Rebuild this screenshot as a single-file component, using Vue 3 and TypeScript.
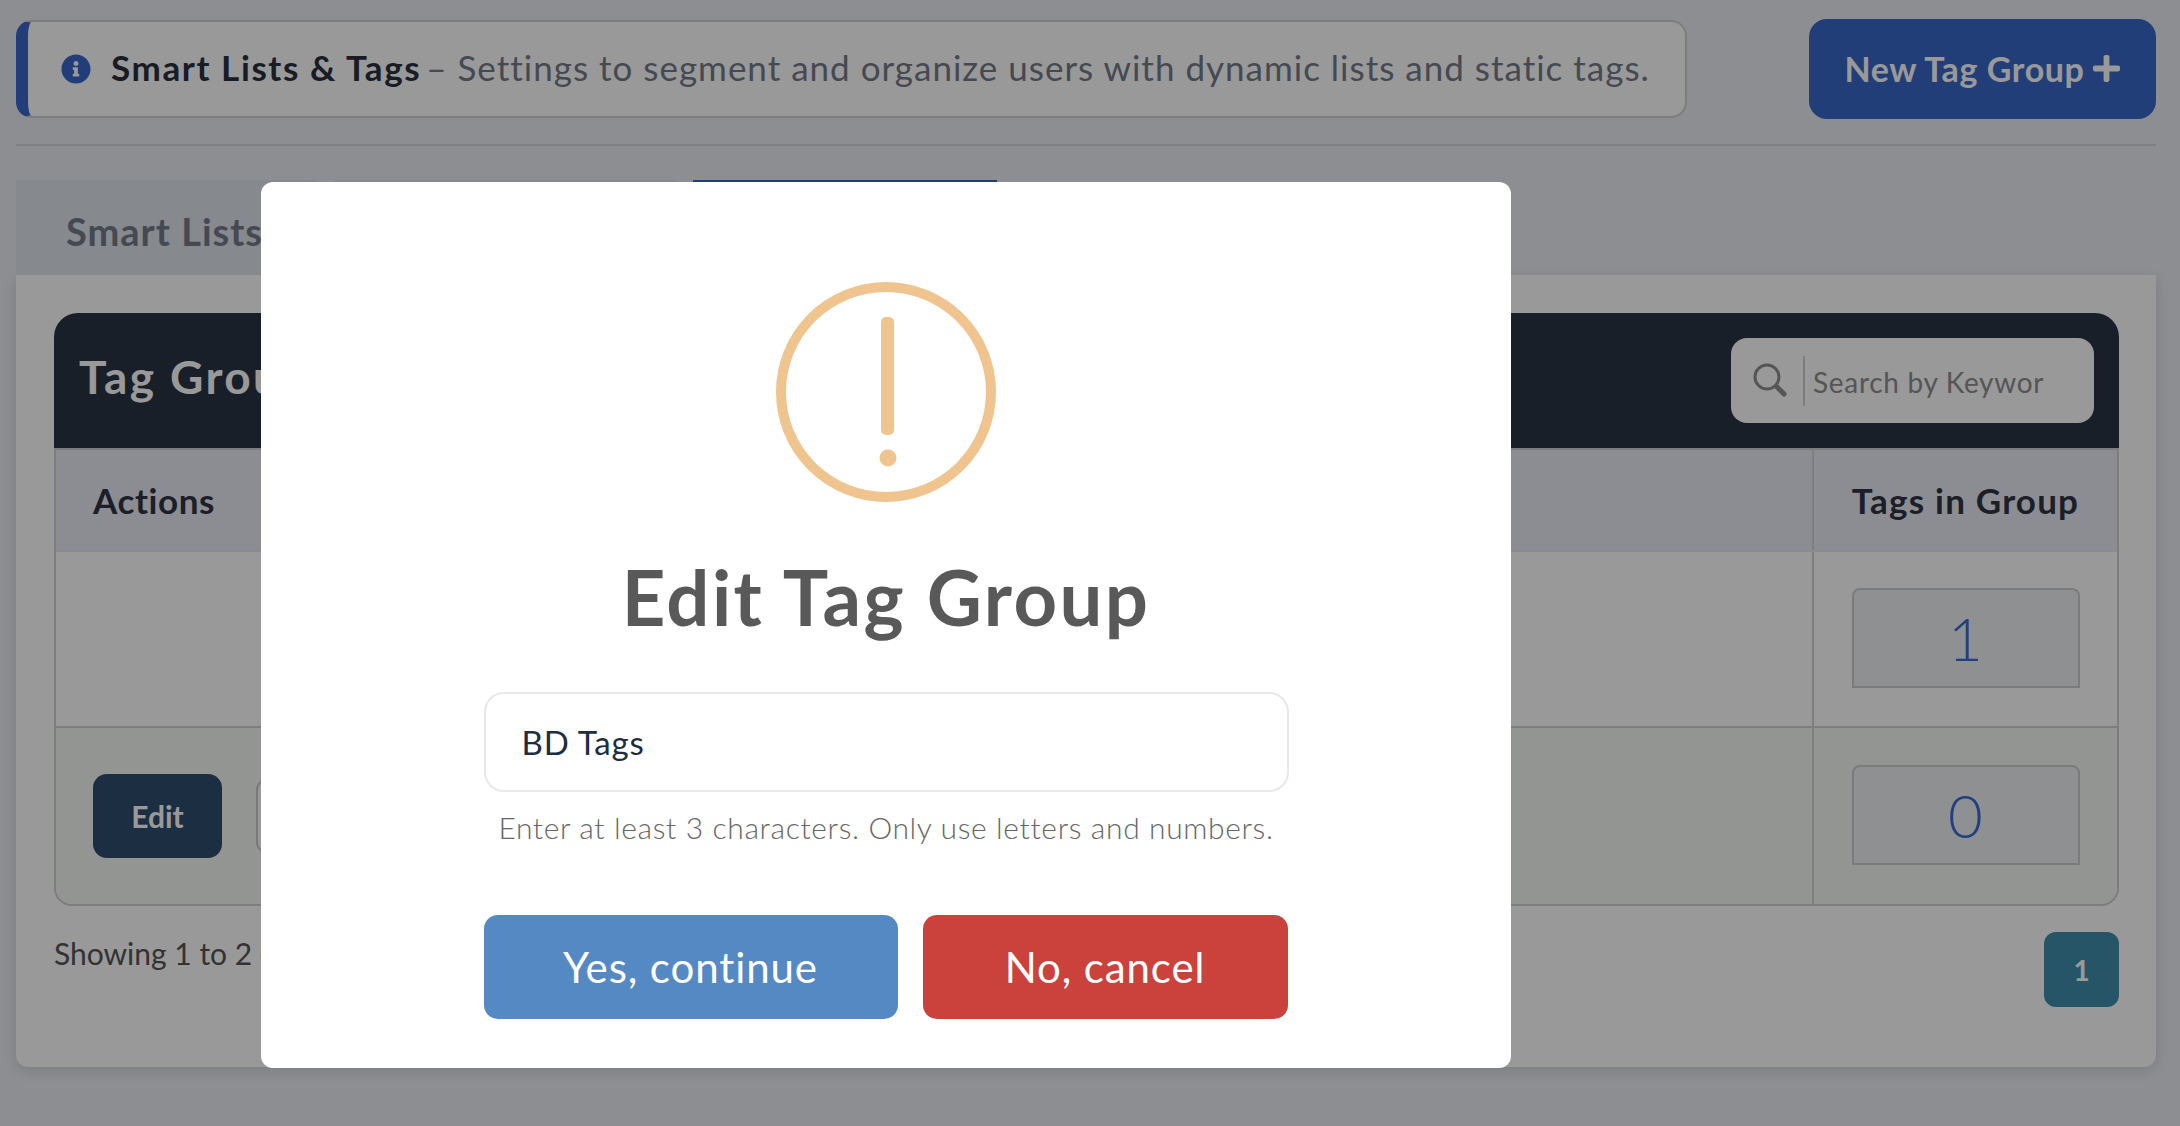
<template>
  <div class="page">
    <div class="top-row">
      <div class="alert">
        <svg class="info-icon" viewBox="0 0 512 512">
          <path d="M256 8C119.043 8 8 119.083 8 256c0 136.997 111.043 248 248 248s248-111.003 248-248C504 119.083 392.957 8 256 8zm0 110c23.196 0 42 18.804 42 42s-18.804 42-42 42-42-18.804-42-42 18.804-42 42-42zm56 254c0 6.627-5.373 12-12 12h-88c-6.627 0-12-5.373-12-12v-24c0-6.627 5.373-12 12-12h12v-64h-12c-6.627 0-12-5.373-12-12v-24c0-6.627 5.373-12 12-12h64c6.627 0 12 5.373 12 12v100h12c6.627 0 12 5.373 12 12v24z" />
        </svg>
        <span class="alert-text"><strong>Smart Lists &amp; Tags</strong> – Settings to segment and organize users with dynamic lists and static tags.</span>
      </div>
      <button class="new-btn">
        New Tag Group
        <svg class="plus-icon" viewBox="0 0 448 512">
          <path d="M416 208H272V64c0-17.67-14.33-32-32-32h-32c-17.67 0-32 14.33-32 32v144H32c-17.67 0-32 14.33-32 32v32c0 17.67 14.33 32 32 32h144v144c0 17.67 14.33 32 32 32h32c17.67 0 32-14.33 32-32V304h144c17.67 0 32-14.33 32-32v-32c0-17.67-14.33-32-32-32z" />
        </svg>
      </button>
    </div>
    <hr class="divider" />

    <div class="tabs">
      <div
        v-for="tab in tabs"
        :key="tab.label"
        :class="['tab', { active: tab.active }]"
        :style="{ width: tab.width + 'px' }"
      >
        {{ tab.label }}
      </div>
    </div>

    <div class="panel">
      <div class="card-head">
        <h2>Tag Groups</h2>
        <div class="search">
          <svg class="search-icon" viewBox="0 0 34 34">
            <circle cx="14" cy="14" r="12" />
            <line class="handle" x1="23.5" y1="23.5" x2="31" y2="31" />
          </svg>
          <input type="text" placeholder="Search by Keyword" />
        </div>
      </div>

      <div class="table">
        <div class="row head">
          <div class="cell actions">Actions</div>
          <div class="cell name">Tag Group Name</div>
          <div class="cell count">Tags in Group</div>
        </div>
        <div v-for="(row, i) in rows" :key="row.name" :class="['row', { odd: i === 1 }]">
          <div class="cell actions">
            <template v-if="row.editable">
              <button class="edit-btn">Edit</button>
              <button class="del-btn">Delete</button>
            </template>
          </div>
          <div class="cell name">{{ row.name }}</div>
          <div class="cell count">
            <div class="badge">{{ row.tags }}</div>
          </div>
        </div>
      </div>

      <div class="table-foot">
        <span class="showing">Showing 1 to 2 of 2 entries</span>
        <button class="page-btn">1</button>
      </div>
    </div>

    <div class="overlay">
      <div class="modal">
        <svg class="warn-icon" viewBox="0 0 220 220">
          <circle class="ring" cx="110" cy="110" r="105" />
          <rect x="105" y="35" width="13" height="118" rx="5" />
          <circle cx="112" cy="176" r="8.5" />
        </svg>
        <h1>Edit Tag Group</h1>
        <input class="name-input" type="text" value="BD Tags" />
        <p class="hint">Enter at least 3 characters. Only use letters and numbers.</p>
        <div class="modal-btns">
          <button class="yes">Yes, continue</button>
          <button class="no">No, cancel</button>
        </div>
      </div>
    </div>
  </div>
</template>

<script setup lang="ts">
interface TagGroup {
  name: string;
  tags: number;
  editable: boolean;
}

const tabs = [
  { label: "Smart Lists", width: 301, active: false },
  { label: "Static Tags", width: 342, active: false },
  { label: "Tag Groups", width: 304, active: true },
];

const rows: TagGroup[] = [
  { name: "Default Tags", tags: 1, editable: false },
  { name: "BD Tags", tags: 0, editable: true },
];
</script>

<style>
body {
  margin: 0;
  background: #ebedf3;
}
</style>

<style scoped>
.page {
  box-sizing: border-box;
  height: 1126px;
  padding: 19px 24px 0 16px;
  font-family: "Lato", "Noto Sans", sans-serif;
  color: #2f3543;
  overflow: hidden;
}

.top-row {
  display: flex;
  justify-content: space-between;
  height: 100px;
}

.alert {
  box-sizing: border-box;
  display: flex;
  align-items: center;
  width: 1671px;
  height: 98px;
  margin-top: 1px;
  padding-left: 33px;
  background: #fff;
  border: 2px solid #d0d0d0;
  border-left: 12px solid #3a68c8;
  border-radius: 16px;
}

.info-icon {
  width: 30px;
  height: 30px;
  fill: #3a68c8;
  margin-right: 20px;
  flex-shrink: 0;
}

.alert-text {
  margin-top: -4px;
  font-size: 35px;
  color: #737b89;
  letter-spacing: 1px;
  white-space: nowrap;
}

.alert-text strong {
  margin-right: -5px;
  font-weight: 700;
  color: #2b303c;
  letter-spacing: 1.6px;
}

.new-btn {
  display: flex;
  align-items: center;
  justify-content: center;
  gap: 9px;
  width: 347px;
  padding-bottom: 3px;
  border: none;
  border-radius: 18px;
  background: #3a68c8;
  color: #fff;
  font: 700 34px "Lato", sans-serif;
  letter-spacing: 0.6px;
}

.plus-icon {
  width: 27px;
  height: 31px;
  fill: #fff;
}

.divider {
  height: 2px;
  margin: 25px 0 34px;
  border: none;
  background: #d3d5da;
}

.tabs {
  display: flex;
  gap: 17px;
  height: 95px;
}

.tab {
  box-sizing: border-box;
  padding: 28px 50px 0;
  background: #dfe4ec;
  font-size: 38px;
  font-weight: 700;
  color: #737b89;
  letter-spacing: 1px;
  white-space: nowrap;
}

.tab.active {
  background: #fff;
  border-top: 3px solid #3a68c8;
}

.panel {
  box-sizing: border-box;
  height: 792px;
  padding: 38px 37px 0 38px;
  background: #fff;
  border-radius: 0 0 12px 12px;
  box-shadow: 0 4px 14px rgba(0, 0, 0, 0.12);
}

.card-head {
  box-sizing: border-box;
  display: flex;
  align-items: center;
  justify-content: space-between;
  height: 135px;
  padding: 0 25px;
  background: #283444;
  border-radius: 24px 24px 0 0;
}

.card-head h2 {
  margin: 0 0 8px;
  font-size: 46px;
  font-weight: 700;
  color: #fff;
  letter-spacing: 2.4px;
}

.search {
  box-sizing: border-box;
  display: flex;
  align-items: center;
  width: 363px;
  height: 85px;
  padding-left: 22px;
  background: #fff;
  border-radius: 16px;
}

.search-icon {
  width: 34px;
  height: 34px;
  flex-shrink: 0;
  margin-top: -2px;
  fill: none;
  stroke: #8e8e8e;
  stroke-width: 3;
}

.search-icon .handle {
  stroke-width: 5;
  stroke-linecap: round;
}

.search input {
  box-sizing: border-box;
  width: 241px;
  height: 50px;
  margin-left: 16px;
  padding: 2px 0 0 8px;
  border: none;
  border-left: 2px solid #d2d2d2;
  outline: none;
  font: 400 28px "Lato", sans-serif;
  letter-spacing: 0.7px;
}

.search input::placeholder {
  color: #8e8e8e;
  opacity: 1;
}

.table {
  border: solid #d0d0d0;
  border-width: 0 2px 2px;
  border-radius: 0 0 18px 18px;
}

.row {
  box-sizing: border-box;
  display: flex;
  height: 176px;
  border-top: 2px solid #e8e8e8;
}

.row.head {
  height: 102px;
  background: #e8ebf3;
  border-top: 2px solid #cfcfd0;
  font-size: 35px;
  font-weight: 700;
  color: #2f3543;
  letter-spacing: 0.6px;
}

.row.odd {
  height: 178px;
  background: #f6f8f6;
  border-top-color: #d3d3d3;
  border-radius: 0 0 16px 16px;
}

.cell {
  display: flex;
  align-items: center;
  padding: 0 37px;
  box-sizing: border-box;
}

.actions {
  width: 600px;
  gap: 34px;
}

.name {
  flex: 1;
  font-size: 32px;
}

.count {
  width: 305px;
  justify-content: center;
  padding: 0;
  border-left: 2px solid #d3d3d3;
}

.row.head .count {
  letter-spacing: 1.2px;
  white-space: nowrap;
}

.badge {
  box-sizing: border-box;
  display: flex;
  align-items: center;
  justify-content: center;
  width: 228px;
  height: 100px;
  margin-bottom: 3px;
  background: #eef0f3;
  border: 2px solid #cccdd0;
  border-radius: 8px 8px 0 0;
  font-size: 60px;
  font-weight: 300;
  color: #3a6bd5;
}

.edit-btn {
  width: 129px;
  height: 84px;
  border: none;
  border-radius: 14px;
  background: #2f4d6e;
  color: #fff;
  font: 700 30px "Lato", sans-serif;
}

.del-btn {
  width: 140px;
  height: 76px;
  border: 2px solid #ccc;
  border-radius: 12px;
  background: #fff;
  color: #555;
  font: 700 28px "Lato", sans-serif;
}

.table-foot {
  display: flex;
  align-items: flex-start;
  justify-content: space-between;
  margin-top: 26px;
}

.showing {
  padding-top: 3px;
  font-size: 30px;
  color: #555;
}

.page-btn {
  width: 75px;
  height: 75px;
  border: none;
  border-radius: 12px;
  background: #3f8eaa;
  color: #fff;
  font: 700 28px "Lato", sans-serif;
}

.overlay {
  box-sizing: border-box;
  position: fixed;
  inset: 0;
  padding: 182px 0 0 261px;
  background: rgba(0, 0, 0, 0.4);
}

.modal {
  box-sizing: border-box;
  display: flex;
  flex-direction: column;
  align-items: center;
  width: 1250px;
  height: 886px;
  padding-top: 100px;
  background: #fff;
  border-radius: 12px;
}

.warn-icon {
  width: 220px;
  height: 220px;
  flex-shrink: 0;
  fill: #f0c48f;
}

.warn-icon .ring {
  fill: none;
  stroke: #f0c48f;
  stroke-width: 10;
}

.modal h1 {
  margin: 49px 0 0;
  font-size: 76px;
  line-height: 92px;
  font-weight: 700;
  color: #595959;
  letter-spacing: 2.4px;
}

.name-input {
  box-sizing: border-box;
  width: 805px;
  height: 100px;
  margin-top: 49px;
  padding: 0 36px;
  border: 2px solid #e8e8e8;
  border-radius: 20px;
  outline: none;
  font: 400 33px "Lato", sans-serif;
  color: #1c2e42;
  letter-spacing: 0.8px;
}

.hint {
  margin: 17px 0 0;
  font-size: 30px;
  line-height: 36px;
  font-weight: 300;
  color: #666;
  letter-spacing: 0.63px;
}

.modal-btns {
  display: flex;
  gap: 25px;
  width: 805px;
  margin-top: 70px;
}

.modal-btns button {
  height: 104px;
  border: none;
  border-radius: 14px;
  color: #fff;
  font: 400 42px "Lato", sans-serif;
  letter-spacing: 0.9px;
}

.yes {
  width: 414px;
  background: #5589c4;
}

.no {
  width: 365px;
  background: #cb413b;
}
</style>
